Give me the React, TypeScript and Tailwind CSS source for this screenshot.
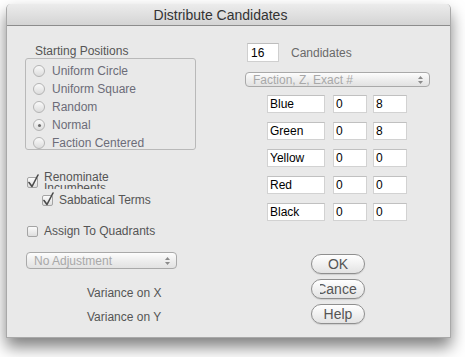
import type { ReactNode } from "react";

const font = { fontFamily: '"Liberation Sans", Arial, sans-serif' };

// Aqua-ish radio, faded because the whole group is disabled.
function Radio({ label, on = false }: { label: string; on?: boolean }) {
  return (
    <div className="flex h-[18px] items-center gap-[7px]">
      <span className="flex h-[12px] w-[12px] items-center justify-center rounded-full border border-[#b4b4b4] bg-gradient-to-b from-[#fafafa] to-[#dcdcdc]">
        {on && <span className="h-[3px] w-[3px] rounded-full bg-[#6a6a6a]" />}
      </span>
      <span className="text-[12px] leading-[14px] text-[#6c6c78]">{label}</span>
    </div>
  );
}

function Check({ on = false }: { on?: boolean }) {
  return (
    <span className="relative block h-[11px] w-[11px] shrink-0 rounded-[2px] border border-[#a4a4a4] bg-gradient-to-b from-[#fbfbfb] to-[#dedede]">
      {on && (
        <svg className="absolute -left-[1px] -top-[4px]" width="13" height="15" viewBox="0 0 13 15">
          <path d="M2 8.5 L5 12.5 L11 1" fill="none" stroke="#4a4a4a" strokeWidth="1.6" strokeLinecap="round" strokeLinejoin="round" />
        </svg>
      )}
    </span>
  );
}

function Popup({ label, className }: { label: string; className: string }) {
  return (
    <div className={`flex items-center justify-between rounded-[4px] border border-[#a9a9a9] bg-gradient-to-b from-[#fdfdfd] via-[#eeeeee] to-[#e2e2e2] pl-[7px] pr-[5px] ${className}`}>
      <span className="text-[12px] leading-[12px] text-[#a8a8a8]">{label}</span>
      <svg width="7" height="10" viewBox="0 0 7 10">
        <path d="M3.5 1 L6 4 L1 4 Z" fill="#8a8a8a" />
        <path d="M3.5 9 L6 6 L1 6 Z" fill="#8a8a8a" />
      </svg>
    </div>
  );
}

function Field({ value, w }: { value: string; w: string }) {
  return (
    <div className={`flex h-[18px] items-center border border-[#d2d2d2] border-t-[#c0c0c0] bg-white pl-[2px] text-[12px] leading-[14px] text-black ${w}`}>
      {value}
    </div>
  );
}

function Button({ children }: { children: ReactNode }) {
  return (
    <div className="flex h-[20px] w-[54px] items-center justify-center rounded-full border border-[#8f8f8f] bg-gradient-to-b from-[#ffffff] via-[#f1f1f1] to-[#e3e3e3] shadow-[0_1px_1px_rgba(0,0,0,0.12)]">
      <span className="flex w-[37px] justify-center overflow-hidden whitespace-nowrap text-[14px] leading-[16px] text-[#555]">
        {children}
      </span>
    </div>
  );
}

const factions = [
  ["Blue", "0", "8"],
  ["Green", "0", "8"],
  ["Yellow", "0", "0"],
  ["Red", "0", "0"],
  ["Black", "0", "0"],
];

export default function App() {
  return (
    <div className="h-[357px] w-[465px] bg-white pl-[6px] pt-[4px]" style={font}>
      <div className="flex h-[334px] w-[445px] flex-col overflow-hidden rounded-t-[5px] border-x border-b border-[#a9a9a9] bg-[#e9e9e9] shadow-[0_9px_16px_rgba(0,0,0,0.5)]">
        {/* title bar */}
        <div className="flex h-[22px] shrink-0 items-center justify-center border-b border-[#8c8c8c] bg-gradient-to-b from-[#ececec] to-[#d4d4d4] pr-[16px]">
          <span className="text-[14px] leading-[16px] text-[#333]">Distribute Candidates</span>
        </div>

        <div className="flex pl-[18px] pt-[17px]">
          {/* left column */}
          <div className="flex w-[171px] flex-col">
            <div className="ml-[10px] mt-[1px] text-[12px] leading-[14px] text-[#555]">Starting Positions</div>
            <div className="h-[92px] overflow-hidden rounded-[3px] border border-[#b9b9b9] pl-[7px] pt-[3px]">
              <Radio label="Uniform Circle" />
              <Radio label="Uniform Square" />
              <Radio label="Random" />
              <Radio label="Normal" on />
              <Radio label="Faction Centered" />
            </div>

            <div className="ml-[2px] mt-[22px] flex items-start gap-[6px]">
              <span className="mt-[5px]">
                <Check on />
              </span>
              <span className="h-[17px] w-[90px] overflow-hidden text-[12px] leading-[11px] text-[#555]">
                Renominate Incumbents
              </span>
            </div>
            <div className="ml-[17px] mt-[4px] flex h-[14px] items-center gap-[6px]">
              <Check on />
              <span className="text-[12px] leading-[14px] text-[#555]">Sabbatical Terms</span>
            </div>
            <div className="ml-[2px] mt-[17px] flex h-[14px] items-center gap-[6px]">
              <Check />
              <span className="text-[12px] leading-[14px] text-[#555]">Assign To Quadrants</span>
            </div>

            <Popup label="No Adjustment" className="ml-[1px] mt-[14px] h-[17px] w-[151px]" />

            <div className="ml-[62px] mt-[17px] text-[12px] leading-[14px] text-[#555]">Variance on X</div>
            <div className="ml-[62px] mt-[10px] text-[12px] leading-[14px] text-[#555]">Variance on Y</div>
          </div>

          {/* right column */}
          <div className="ml-[49px] flex w-[186px] flex-col">
            <div className="flex items-center">
              <div className="ml-[2px] flex h-[19px] w-[32px] items-center border border-[#cfcfcf] border-t-[#bdbdbd] bg-white pl-[3px] text-[12px] text-black">
                16
              </div>
              <span className="ml-[12px] text-[12px] leading-[14px] text-[#6a6a6a]">Candidates</span>
            </div>

            <Popup label="Faction, Z, Exact #" className="mt-[10px] h-[15px] w-[185px]" />

            <div className="ml-[22px] mt-[8px] flex flex-col gap-[9px]">
              {factions.map(([name, a, b]) => (
                <div key={name} className="flex">
                  <Field value={name} w="w-[58px]" />
                  <div className="ml-[8px]">
                    <Field value={a} w="w-[34px]" />
                  </div>
                  <div className="ml-[6px]">
                    <Field value={b} w="w-[34px]" />
                  </div>
                </div>
              ))}
            </div>

            <div className="ml-[66px] mt-[33px] flex flex-col gap-[7px]">
              <Button>OK</Button>
              <div className="-mt-[2px] flex flex-col gap-[5px]">
                <Button>Cancel</Button>
                <Button>Help</Button>
              </div>
            </div>
          </div>
        </div>
      </div>
    </div>
  );
}
